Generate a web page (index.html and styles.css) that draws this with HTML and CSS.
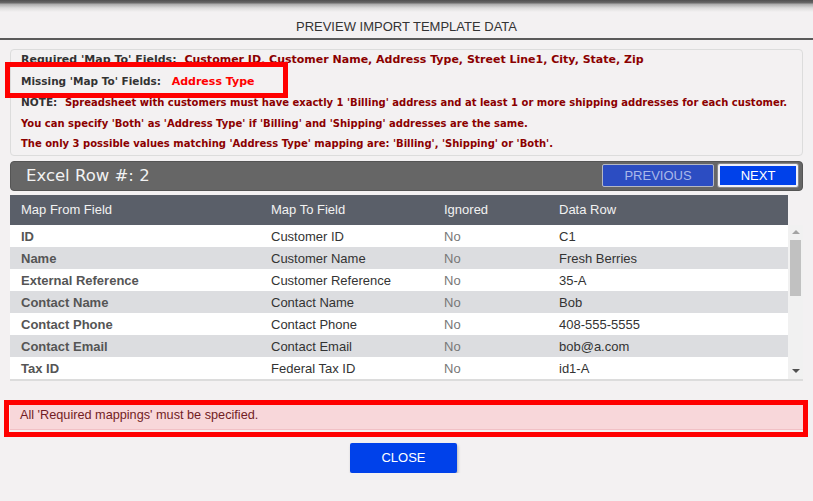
FILE: index.html
```html
<!DOCTYPE html>
<html lang="en">
<head>
  <meta charset="UTF-8">
  <title>Preview Import Template Data</title>
  <link rel="stylesheet" href="styles.css">
</head>
<body>
  <div class="top-shade"></div>
  <div class="modal-title">PREVIEW IMPORT TEMPLATE DATA</div>

  <div class="modal-body">
    <div class="info-box">
      <div class="info-line line-req">
        <span class="lbl">Required 'Map To' Fields:</span>
        <span class="val">Customer ID, Customer Name, Address Type, Street Line1, City, State, Zip</span>
      </div>
      <div class="info-line">
        <span class="lbl">Missing 'Map To' Fields:</span>
        <span class="missing">Address Type</span>
      </div>
      <div class="info-line">
        <span class="lbl">NOTE:</span>
        <span class="val note">Spreadsheet with customers must have exactly 1 'Billing' address and at least 1 or more shipping addresses for each customer.</span>
      </div>
      <div class="info-line val note">You can specify 'Both' as 'Address Type' if 'Billing' and 'Shipping' addresses are the same.</div>
      <div class="info-line val note">The only 3 possible values matching 'Address Type' mapping are: 'Billing', 'Shipping' or 'Both'.</div>
      <div class="mark mark-missing"></div>
    </div>

    <div class="row-bar">
      <span class="row-title">Excel Row #: 2</span>
      <div class="row-nav">
        <button class="btn-prev">PREVIOUS</button>
        <button class="btn-next">NEXT</button>
      </div>
    </div>

    <div class="grid">
      <div class="grid-head">
        <div>Map From Field</div>
        <div>Map To Field</div>
        <div>Ignored</div>
        <div>Data Row</div>
      </div>
      <div class="grid-wrap">
        <div class="grid-body">
          <div class="grid-row"><div class="from">ID</div><div>Customer ID</div><div class="ign">No</div><div>C1</div></div>
          <div class="grid-row"><div class="from">Name</div><div>Customer Name</div><div class="ign">No</div><div>Fresh Berries</div></div>
          <div class="grid-row"><div class="from">External Reference</div><div>Customer Reference</div><div class="ign">No</div><div>35-A</div></div>
          <div class="grid-row"><div class="from">Contact Name</div><div>Contact Name</div><div class="ign">No</div><div>Bob</div></div>
          <div class="grid-row"><div class="from">Contact Phone</div><div>Contact Phone</div><div class="ign">No</div><div>408-555-5555</div></div>
          <div class="grid-row"><div class="from">Contact Email</div><div>Contact Email</div><div class="ign">No</div><div>bob@a.com</div></div>
          <div class="grid-row"><div class="from">Tax ID</div><div>Federal Tax ID</div><div class="ign">No</div><div>id1-A</div></div>
        </div>
        <div class="scrollbar">
          <div class="sb-up"></div>
          <div class="sb-track"><div class="sb-thumb"></div></div>
          <div class="sb-down"></div>
        </div>
      </div>
    </div>

    <div class="alert-wrap">
      <div class="alert">All 'Required mappings' must be specified.</div>
      <div class="mark mark-alert"></div>
    </div>

    <div class="actions">
      <button class="btn-close">CLOSE</button>
    </div>
  </div>
</body>
</html>
```

FILE: styles.css
```css
body {
  margin: 0;
  padding: 0;
  background-color: #f3f1f2;
  font-family: "Liberation Sans", Arial, sans-serif;
  color: #333;
}

.top-shade {
  height: 12px;
  background: linear-gradient(#4f4f4f 0, #6a6a6a 3px, #a9a9a9 4px, #dcdcdc 8px, #f3f1f2 12px);
}

.modal-title {
  height: 26px;
  line-height: 30px;
  text-align: center;
  font-size: 13px;
  color: #333;
  border-bottom: 2px solid #5a5a5a;
}

.modal-body {
  padding: 9px 10px 0 10px;
}

/* required / missing fields summary */
.info-box {
  position: relative;
  border: 1px solid #dcdcdc;
  border-radius: 4px;
  padding: 0 10px;
  font-family: "DejaVu Sans", Verdana, sans-serif;
  font-size: 10.5px;
  font-weight: bold;
  line-height: 20.5px;
  color: #333;
  white-space: nowrap;
}

.info-box .line-req {
  font-size: 11px;
}

.info-box .lbl {
  margin-right: 4px;
}

.info-box .val {
  color: #8b0000;
}

.info-box .note {
  font-size: 10px;
}

.info-box .missing {
  color: #ff0000;
  font-size: 11px;
  margin-left: 3px;
}

.mark {
  position: absolute;
  border: 5px solid #ff0000;
  pointer-events: none;
}

.mark-missing {
  left: -6px;
  top: 12px;
  width: 273px;
  height: 26px;
}

/* excel row header */
.row-bar {
  display: flex;
  align-items: center;
  justify-content: space-between;
  height: 28px;
  margin-top: 5px;
  background-color: #666;
  border: 1px solid #555;
  border-radius: 4px;
  padding: 0 4px 0 15px;
}

.row-title {
  font-family: "DejaVu Sans", Verdana, sans-serif;
  font-size: 16.5px;
  color: #f2f2f2;
}

.row-nav {
  display: flex;
  gap: 4px;
}

.row-nav button {
  height: 23px;
  font-family: "Liberation Sans", Arial, sans-serif;
  font-size: 13px;
  cursor: pointer;
  border-radius: 2px;
}

.btn-prev {
  width: 112px;
  background-color: #2c4dc2;
  color: #a9b8ea;
  border: 1px solid #b5b8c4;
}

.btn-next {
  width: 80px;
  background-color: #0041ea;
  color: #fff;
  border: 2px solid #f0f0f8;
  box-shadow: 0 0 0 1px #888;
}

/* mapping grid */
.grid {
  margin-top: 4px;
}

.grid-head,
.grid-row {
  display: grid;
  grid-template-columns: 250px 173px 115px 1fr;
  align-items: center;
}

.grid-head {
  width: 778px;
  height: 30px;
  background-color: #5a5f69;
  color: #f2f2f2;
  font-size: 13px;
}

.grid-head div,
.grid-row div {
  padding-left: 11px;
}

.grid-wrap {
  display: flex;
  height: 154px;
  border-bottom: 2px solid #dcdcdc;
  width: 793px;
}

.grid-body {
  width: 778px;
  overflow: hidden;
  font-size: 13px;
  color: #333;
}

.grid-row {
  height: 22px;
  padding-top: 1px;
  box-sizing: border-box;
  background-color: #fff;
}

.grid-row:nth-child(even) {
  background-color: #dcdde0;
}

.grid-row .from {
  font-weight: bold;
  color: #555;
}

.grid-row .ign {
  color: #777;
}

.scrollbar {
  width: 15px;
  display: flex;
  flex-direction: column;
  background-color: #f1f1f1;
}

.sb-up,
.sb-down {
  height: 15px;
  display: flex;
  align-items: center;
  justify-content: center;
}

.sb-up::after,
.sb-down::after {
  content: "";
  border-left: 4px solid transparent;
  border-right: 4px solid transparent;
}

.sb-up::after {
  border-bottom: 4px solid #a3a3a3;
}

.sb-down::after {
  border-top: 4px solid #505050;
}

.sb-track {
  flex: 1;
  padding: 0 2px;
}

.sb-thumb {
  height: 56px;
  background-color: #c1c1c1;
}

/* validation message */
.alert-wrap {
  position: relative;
  margin-top: 21px;
}

.alert {
  height: 27px;
  line-height: 26px;
  padding-left: 10px;
  background-color: #f8d7da;
  border-bottom: 1px solid #f1c0c5;
  color: #721c24;
  font-size: 12.7px;
}

.mark-alert {
  left: -6px;
  top: -2px;
  width: 794px;
  height: 27px;
}

.actions {
  display: flex;
  justify-content: center;
  margin-top: 13px;
  padding-right: 6px;
}

.btn-close {
  width: 107px;
  height: 30px;
  background-color: #0041ea;
  color: #fff;
  border: none;
  border-radius: 2px;
  font-family: "Liberation Sans", Arial, sans-serif;
  font-size: 13px;
  box-shadow: 1px 2px 3px rgba(0, 0, 0, 0.25);
  cursor: pointer;
}
```
